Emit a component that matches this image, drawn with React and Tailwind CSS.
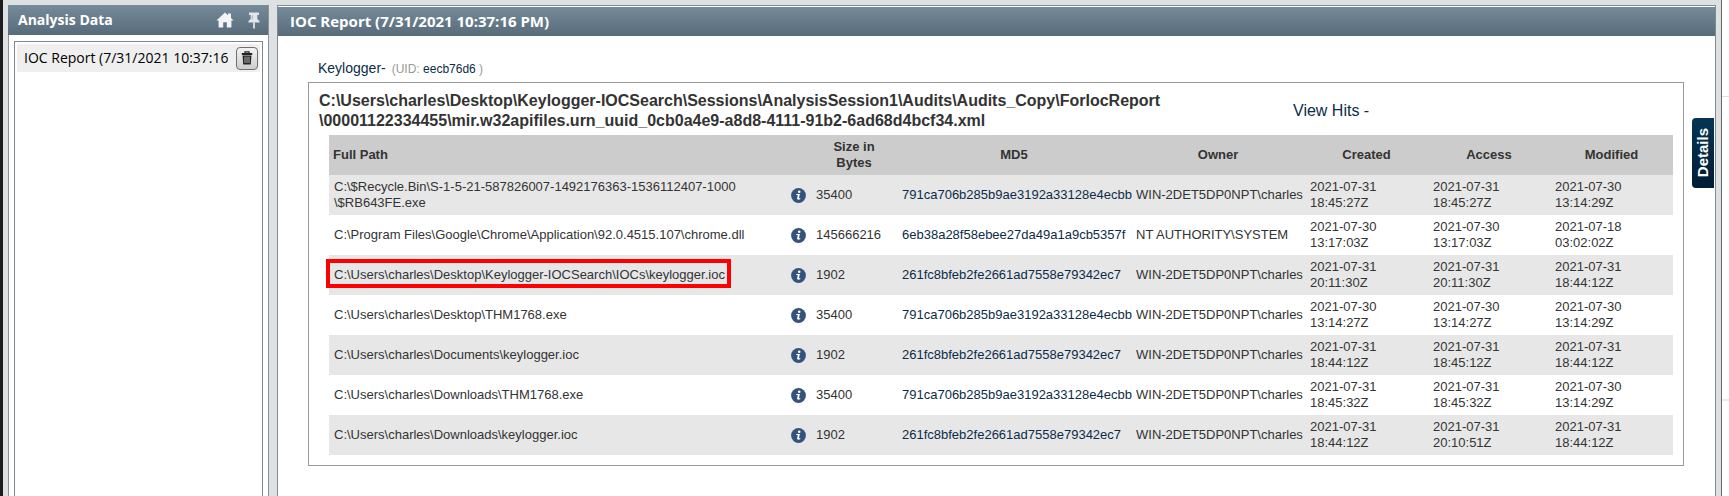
const rows = [
  { path: ['C:\\$Recycle.Bin\\S-1-5-21-587826007-1492176363-1536112407-1000', '\\$RB643FE.exe'], size: '35400', md5: '791ca706b285b9ae3192a33128e4ecbb', owner: 'WIN-2DET5DP0NPT\\charles', created: ['2021-07-31', '18:45:27Z'], access: ['2021-07-31', '18:45:27Z'], modified: ['2021-07-30', '13:14:29Z'] },
  { path: ['C:\\Program Files\\Google\\Chrome\\Application\\92.0.4515.107\\chrome.dll'], size: '145666216', md5: '6eb38a28f58ebee27da49a1a9cb5357f', owner: 'NT AUTHORITY\\SYSTEM', created: ['2021-07-30', '13:17:03Z'], access: ['2021-07-30', '13:17:03Z'], modified: ['2021-07-18', '03:02:02Z'] },
  { path: ['C:\\Users\\charles\\Desktop\\Keylogger-IOCSearch\\IOCs\\keylogger.ioc'], size: '1902', md5: '261fc8bfeb2fe2661ad7558e79342ec7', owner: 'WIN-2DET5DP0NPT\\charles', created: ['2021-07-31', '20:11:30Z'], access: ['2021-07-31', '20:11:30Z'], modified: ['2021-07-31', '18:44:12Z'], marked: true },
  { path: ['C:\\Users\\charles\\Desktop\\THM1768.exe'], size: '35400', md5: '791ca706b285b9ae3192a33128e4ecbb', owner: 'WIN-2DET5DP0NPT\\charles', created: ['2021-07-30', '13:14:27Z'], access: ['2021-07-30', '13:14:27Z'], modified: ['2021-07-30', '13:14:29Z'] },
  { path: ['C:\\Users\\charles\\Documents\\keylogger.ioc'], size: '1902', md5: '261fc8bfeb2fe2661ad7558e79342ec7', owner: 'WIN-2DET5DP0NPT\\charles', created: ['2021-07-31', '18:44:12Z'], access: ['2021-07-31', '18:45:12Z'], modified: ['2021-07-31', '18:44:12Z'] },
  { path: ['C:\\Users\\charles\\Downloads\\THM1768.exe'], size: '35400', md5: '791ca706b285b9ae3192a33128e4ecbb', owner: 'WIN-2DET5DP0NPT\\charles', created: ['2021-07-31', '18:45:32Z'], access: ['2021-07-31', '18:45:32Z'], modified: ['2021-07-30', '13:14:29Z'] },
  { path: ['C:\\Users\\charles\\Downloads\\keylogger.ioc'], size: '1902', md5: '261fc8bfeb2fe2661ad7558e79342ec7', owner: 'WIN-2DET5DP0NPT\\charles', created: ['2021-07-31', '18:44:12Z'], access: ['2021-07-31', '20:10:51Z'], modified: ['2021-07-31', '18:44:12Z'] },
];

function HomeIcon() {
  return (
    <svg width="18" height="16" viewBox="0 0 18 16" fill="#f3f4f5" aria-hidden="true">
      <path d="M9 0.4 12 3.2V1.4H15V6L17.6 8.6H15.4V15.4H10.8V10.2H7.2V15.4H2.6V8.6H0.4Z" />
    </svg>
  );
}

function PinIcon() {
  return (
    <svg width="12" height="17" viewBox="0 0 12 17" aria-hidden="true">
      <path d="M1 0.5H11V3H9.3V7L11.5 9V10.6H0.5V9L2.7 7V3H1Z" fill="#e3e6e9" />
      <path d="M5.1 10.5H6.9V16L6 17L5.1 16Z" fill="#e3e6e9" />
      <path d="M4.2 3.5V7.5" stroke="#a3adb4" />
    </svg>
  );
}

function TrashIcon() {
  return (
    <svg width="12" height="14" viewBox="0 0 12 14" aria-hidden="true">
      <path d="M4 2V0.8H8V2" fill="none" stroke="#222" strokeWidth="1.2" />
      <path d="M0.8 2H11.2V4H0.8Z" fill="#222" />
      <path d="M1.6 4.6H10.4L9.8 13.4H2.2Z" fill="#222" />
      <path d="M4 5.6V12M6 5.6V12M8 5.6V12" stroke="#c4c4c4" strokeWidth="0.9" />
    </svg>
  );
}

function InfoIcon() {
  return (
    <svg className="block" width="15" height="15" viewBox="0 0 15 15" aria-hidden="true">
      <circle cx="7.5" cy="7.5" r="7.4" fill="#34527a" />
      <circle cx="8.2" cy="3.7" r="1.3" fill="#fff" />
      <path d="M5.3 6H8.9L7.9 10.3L9.3 10V11.1C8.2 12 5.9 12.2 6.1 10.6L6.8 7.1H5.3Z" fill="#fff" />
    </svg>
  );
}

function Stamp({ lines }) {
  return (
    <td className="px-[5px]">
      {lines.map((l) => (
        <div key={l}>{l}</div>
      ))}
    </td>
  );
}

export default function App() {
  return (
    <div className="flex h-screen overflow-hidden border-l-3 border-[#1c1c1c] bg-[#dde1e2] font-['Liberation_Sans',Arial,sans-serif] text-[#333]">
      <aside className="ml-[5px] mt-[5px] flex w-[261px] shrink-0 flex-col border-r border-[#8b9299] font-['Open_Sans','Noto_Sans',sans-serif]">
        <header className="flex h-[30px] shrink-0 items-center bg-linear-to-b from-[#768b9b] to-[#576b79] pl-2.5 pr-2">
          <h2 className="flex-1 text-sm font-bold text-white">Analysis Data</h2>
          <button type="button" aria-label="Home" className="mr-3.5"><HomeIcon /></button>
          <button type="button" aria-label="Pin"><PinIcon /></button>
        </header>
        <div className="flex flex-1 border-l border-[#8b9299] bg-white px-[5px] pt-1.5">
          <ul className="min-w-0 flex-1 border border-b-0 border-[#7f8791] p-0.5">
            <li className="flex h-7 items-center bg-[#efefef] pl-[7px] pr-0.5">
              <span className="min-w-0 flex-1 overflow-hidden whitespace-nowrap text-sm text-black">IOC Report (7/31/2021 10:37:16 PM)</span>
              <button type="button" aria-label="Delete report" className="ml-2 flex h-[23px] w-[22px] shrink-0 items-center justify-center rounded-[4px] border border-[#707070] bg-linear-to-b from-[#f3f3f3] to-[#cdcdcd]">
                <TrashIcon />
              </button>
            </li>
          </ul>
        </div>
      </aside>

      <main className="ml-2 mt-[5px] flex min-w-0 flex-1 flex-col border border-b-0 border-[#7f8b93] bg-white">
        <header className="flex h-[30px] shrink-0 items-center border-t border-white bg-linear-to-b from-[#768b9b] to-[#576b79] px-3 font-['Open_Sans','Noto_Sans',sans-serif]">
          <h1 className="text-[15px] font-bold text-white">IOC Report (7/31/2021 10:37:16 PM)</h1>
        </header>
        <div className="flex items-start">
          <div className="min-w-0 flex-1 pl-[30px] pr-2 pt-[22px]">
            <p className="pb-[3px] pl-2.5 text-xs leading-5 text-[#999]">
              <a href="#keylogger" className="text-sm leading-5 text-[#0b2c47]">Keylogger-</a>
              <span className="ml-1.5">(UID: <a href="#uid" className="text-[#0b2c47]">eecb76d6</a> )</span>
            </p>
            <section className="border border-[#999] px-2.5 pb-2.5">
              <div className="flex items-center justify-between pb-1 pt-2">
                <h3 className="text-base font-bold leading-5">
                  C:\Users\charles\Desktop\Keylogger-IOCSearch\Sessions\AnalysisSession1\Audits\Audits_Copy\ForIocReport
                  <br />
                  \00001122334455\mir.w32apifiles.urn_uuid_0cb0a4e9-a8d8-4111-91b2-6ad68d4bcf34.xml
                </h3>
                <a href="#hits" className="w-[380px] text-base text-[#0b2c47]">View Hits -</a>
              </div>
              <div className="pl-2.5">
                <table className="w-full table-fixed whitespace-nowrap text-left text-[13px] leading-4">
                  <colgroup>
                    <col />
                    <col className="w-[27px]" />
                    <col className="w-[86px]" />
                    <col className="w-[234px]" />
                    <col className="w-[174px]" />
                    <col className="w-[123px]" />
                    <col className="w-[122px]" />
                    <col className="w-[123px]" />
                  </colgroup>
                  <thead>
                    <tr className="h-10 bg-[#ccc] text-center">
                      <th colSpan="2" className="px-1 text-left">Full Path</th>
                      <th>Size in<br />Bytes</th>
                      <th>MD5</th>
                      <th>Owner</th>
                      <th>Created</th>
                      <th>Access</th>
                      <th>Modified</th>
                    </tr>
                  </thead>
                  <tbody>
                    {rows.map((r, i) => (
                      <tr key={i} className="h-10 odd:bg-[#e7e7e7]">
                        <td className="relative px-[5px]">
                          {r.marked && <span className="absolute -left-[3px] top-1 h-[29px] w-[405px] border-4 border-[#fe0000]" />}
                          {r.path.map((l) => (
                            <div key={l}>{l}</div>
                          ))}
                        </td>
                        <td className="pl-[7px]">
                          <button type="button" aria-label="File information" className="block"><InfoIcon /></button>
                        </td>
                        <td className="px-[5px]">{r.size}</td>
                        <td className="px-[5px]"><a href="#md5" className="text-[#0b2c47]">{r.md5}</a></td>
                        <td className="px-[5px]">{r.owner}</td>
                        <Stamp lines={r.created} />
                        <Stamp lines={r.access} />
                        <Stamp lines={r.modified} />
                      </tr>
                    ))}
                  </tbody>
                </table>
              </div>
            </section>
          </div>
          <button type="button" className="mr-px mt-[82px] flex h-[70px] w-[22px] items-center justify-center rounded-l-[4px] bg-linear-to-b from-[#063555] to-[#001d33] text-[15px] font-bold text-white">
            <span className="rotate-180 [writing-mode:vertical-rl]">Details</span>
          </button>
        </div>
      </main>

      <div className="ml-[5px] flex w-2 shrink-0 flex-col border-l border-[#666] bg-white">
        <div className="h-[97px] border-b border-[#e0e0e0]" />
        <div className="h-[304px] border-b-2 border-[#ececec]" />
      </div>
    </div>
  );
}
